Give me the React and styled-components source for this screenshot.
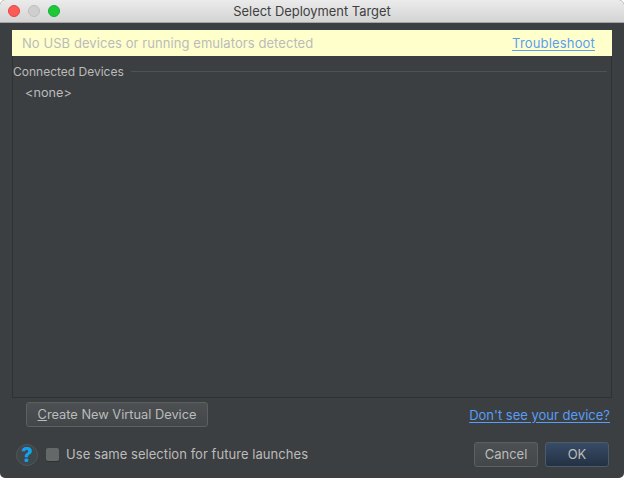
import React from "react";
import styled, { createGlobalStyle } from "styled-components";

const GlobalStyle = createGlobalStyle`
  html, body {
    margin: 0;
    padding: 0;
    background: #ffffff;
  }
`;

const Window = styled.div`
  width: 624px;
  height: 478px;
  display: flex;
  flex-direction: column;
  overflow: hidden;
  border-radius: 5px;
  background: #3c3f41;
  font-family: Inter, "Liberation Sans", sans-serif;
  font-size: 13px;
  color: #bbbbbb;
`;

const TitleBar = styled.div`
  height: 22px;
  flex: none;
  display: flex;
  align-items: center;
  padding-left: 8px;
  position: relative;
  background: linear-gradient(#ebebeb, #d4d4d4);
  border-bottom: 1px solid #a5a5a5;
`;

const Light = styled.span`
  width: 12px;
  height: 12px;
  margin-right: 8px;
  border-radius: 50%;
  box-sizing: border-box;
  background: ${(p) => p.$color};
  border: 1px solid ${(p) => p.$edge};
`;

const Title = styled.div`
  position: absolute;
  left: 0;
  right: 0;
  text-align: center;
  color: #3f3f3f;
  font-size: 12.9px;
`;

const Body = styled.div`
  flex: 1;
  display: flex;
  flex-direction: column;
  padding: 7px 12px 0;
  min-height: 0;
`;

const Banner = styled.div`
  height: 26px;
  flex: none;
  display: flex;
  align-items: center;
  justify-content: space-between;
  padding: 0 17px 0 10px;
  background: #ffffcc;
  color: #bbbbbb;
  letter-spacing: 0.07px;
`;

const Link = styled.a`
  color: #589df6;
  letter-spacing: ${(p) => p.$spacing || 0}px;
  text-decoration: underline;
  text-underline-offset: 2px;
  cursor: pointer;
`;

const DevicePanel = styled.div`
  height: 342px;
  flex: none;
  box-sizing: border-box;
  border: 1px solid #2f3132;
  border-top: none;
`;

const GroupHeader = styled.div`
  display: flex;
  align-items: center;
  gap: 7px;
  height: 16px;
  margin: 7px 4px 0 0;
  font-size: 12px;
`;

const GroupLine = styled.div`
  flex: 1;
  height: 1px;
  background: #515151;
`;

const DeviceRow = styled.div`
  padding: 6px 0 0 12px;
  height: 15px;
  line-height: 15px;
  font-size: 12.7px;
`;

const LinkRow = styled.div`
  display: flex;
  align-items: center;
  justify-content: space-between;
  padding: 4px 2px 0 14px;
`;

const Button = styled.button`
  height: 25px;
  box-sizing: border-box;
  padding: 0 0 1px;
  width: ${(p) => p.$width}px;
  border-radius: 3px;
  border: 1px solid ${(p) => (p.$primary ? "#4c5a6e" : "#5e6060")};
  background: ${(p) =>
    p.$primary ? "linear-gradient(#384c67, #233143)" : "linear-gradient(#4c5052, #434749)"};
  color: #bbbbbb;
  font-family: inherit;
  font-size: ${(p) => p.$size || 13}px;
`;

const Footer = styled.div`
  display: flex;
  align-items: center;
  padding: 15px 3px 0 4px;
`;

const HelpButton = styled.div`
  width: 22px;
  height: 22px;
  flex: none;
  box-sizing: border-box;
  border-radius: 50%;
  border: 1px solid #515658;
  background: #3f474b;
  color: #12a3ee;
  font-size: 20px;
  font-weight: 800;
  display: flex;
  align-items: center;
  justify-content: center;
`;

const CheckLabel = styled.label`
  display: flex;
  align-items: center;
  gap: 7px;
  margin-left: 8px;
  flex: 1;
  letter-spacing: 0.05px;
  line-height: 15px;
`;

const CheckBox = styled.span`
  width: 13px;
  height: 13px;
  border-radius: 2px;
  background: #656869;
  box-shadow: 0 1px 0 #2f3132;
`;

const Actions = styled.div`
  display: flex;
  gap: 7px;
`;

export default function App() {
  return (
    <>
      <GlobalStyle />
      <Window>
        <TitleBar>
          <Light $color="#fc5b57" $edge="#e24640" />
          <Light $color="#cfcfcf" $edge="#bdbdbd" />
          <Light $color="#1ec933" $edge="#14ae46" />
          <Title>Select Deployment Target</Title>
        </TitleBar>
        <Body>
          <Banner>
            <span>No USB devices or running emulators detected</span>
            <Link $spacing={0.17}>Troubleshoot</Link>
          </Banner>
          <DevicePanel>
            <GroupHeader>
              Connected Devices
              <GroupLine />
            </GroupHeader>
            <DeviceRow>&lt;none&gt;</DeviceRow>
          </DevicePanel>
          <LinkRow>
            <Button $width={182} $size={12.8}>
              <u>C</u>reate New Virtual Device
            </Button>
            <Link>Don't see your device?</Link>
          </LinkRow>
          <Footer>
            <HelpButton>?</HelpButton>
            <CheckLabel>
              <CheckBox />
              Use same selection for future launches
            </CheckLabel>
            <Actions>
              <Button $width={64}>Cancel</Button>
              <Button $width={64} $primary>
                OK
              </Button>
            </Actions>
          </Footer>
        </Body>
      </Window>
    </>
  );
}
